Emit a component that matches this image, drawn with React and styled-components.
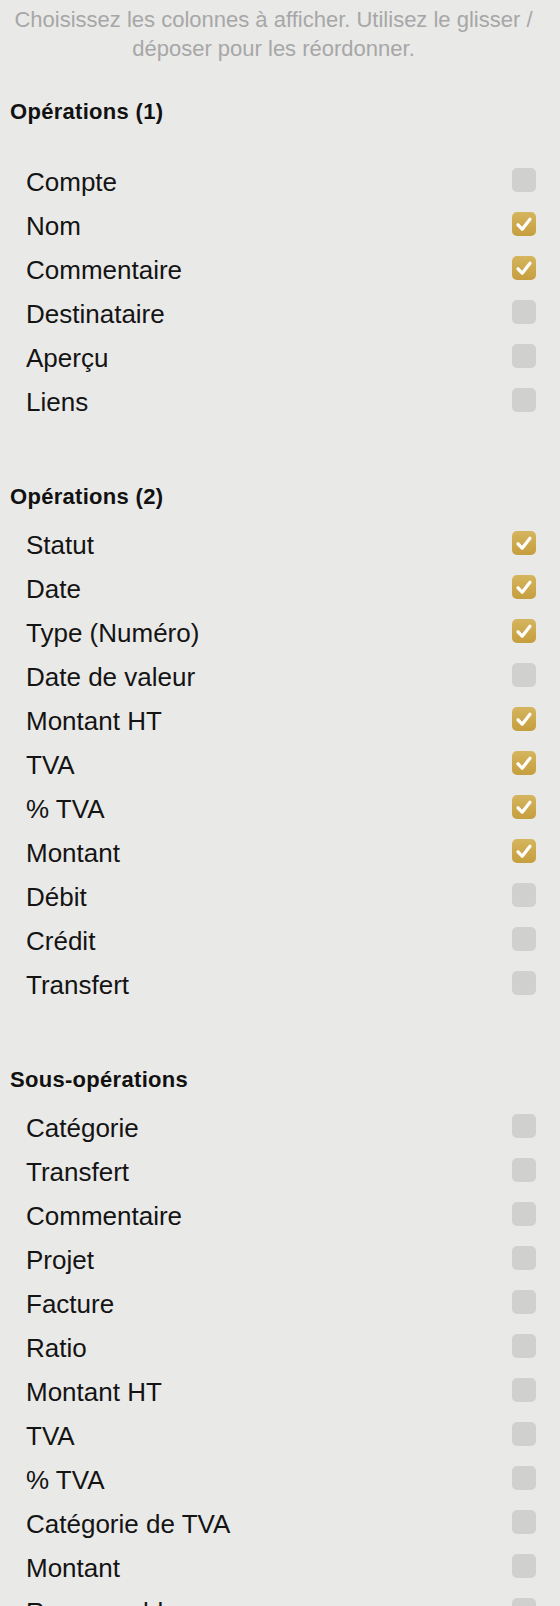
import React from 'react';
import styled, { createGlobalStyle } from 'styled-components';

const sections = [
  {
    title: 'Opérations (1)',
    spaced: true,
    items: [
      ['Compte', false],
      ['Nom', true],
      ['Commentaire', true],
      ['Destinataire', false],
      ['Aperçu', false],
      ['Liens', false],
    ],
  },
  {
    title: 'Opérations (2)',
    items: [
      ['Statut', true],
      ['Date', true],
      ['Type (Numéro)', true],
      ['Date de valeur', false],
      ['Montant HT', true],
      ['TVA', true],
      ['% TVA', true],
      ['Montant', true],
      ['Débit', false],
      ['Crédit', false],
      ['Transfert', false],
    ],
  },
  {
    title: 'Sous-opérations',
    items: [
      ['Catégorie', false],
      ['Transfert', false],
      ['Commentaire', false],
      ['Projet', false],
      ['Facture', false],
      ['Ratio', false],
      ['Montant HT', false],
      ['TVA', false],
      ['% TVA', false],
      ['Catégorie de TVA', false],
      ['Montant', false],
      ['Responsable', false],
    ],
  },
];

const App = () => {
  return (
    <>
      <GlobalStyle />
      <Page>
        <Hint>
          Choisissez les colonnes à afficher. Utilisez le glisser / déposer pour les réordonner.
        </Hint>
        {sections.map(section => (
          <Section key={section.title}>
            <SectionTitle>{section.title}</SectionTitle>
            <List spaced={section.spaced ? 1 : 0}>
              {section.items.map(([label, checked], i) => (
                <Row key={label + i}>
                  <Label>{label}</Label>
                  <Checkbox checked={checked ? 1 : 0}>
                    {checked && (
                      <svg width="24" height="24" viewBox="0 0 24 24">
                        <path
                          d="M6 12.8 L10.2 17.2 L18 7.2"
                          fill="none"
                          stroke="#fff"
                          strokeWidth="3.2"
                          strokeLinecap="round"
                          strokeLinejoin="round"
                        />
                      </svg>
                    )}
                  </Checkbox>
                </Row>
              ))}
            </List>
          </Section>
        ))}
      </Page>
    </>
  );
};

export default App;

//style

const GlobalStyle = createGlobalStyle`
  html, body {
    margin: 0;
    padding: 0;
    background: #e9e9e7;
    font-family: "Liberation Sans", Arial, sans-serif;
  }
`;

const Page = styled.div`
  width: 547px;
  height: 1606px;
  overflow: hidden;
`;

const Hint = styled.p`
  margin: 0;
  padding: 5px 10px 0;
  font-size: 22px;
  line-height: 29px;
  color: #a7a7a7;
  text-align: center;
`;

const Section = styled.section`
  padding-top: 59px;

  &:first-of-type {
    padding-top: 35px;
  }
`;

const SectionTitle = styled.h4`
  margin: 0;
  padding-left: 10px;
  font-size: 22px;
  line-height: 28px;
  font-weight: bold;
  letter-spacing: 0.3px;
  color: #111;
`;

const List = styled.div`
  display: flex;
  flex-direction: column;
  margin-top: ${props => (props.spaced ? '34px' : '12px')};
`;

const Row = styled.div`
  display: flex;
  align-items: center;
  justify-content: space-between;
  height: 44px;
  padding: 0 11px 0 26px;
`;

const Label = styled.span`
  font-size: 26px;
  line-height: 44px;
  color: #141414;
`;

const Checkbox = styled.span`
  display: flex;
  width: 24px;
  height: 24px;
  margin-bottom: 5px;
  border-radius: 5px;
  background: ${props =>
    props.checked ? 'linear-gradient(#d5b55e, #c69e3e)' : '#d0d0cf'};
`;
